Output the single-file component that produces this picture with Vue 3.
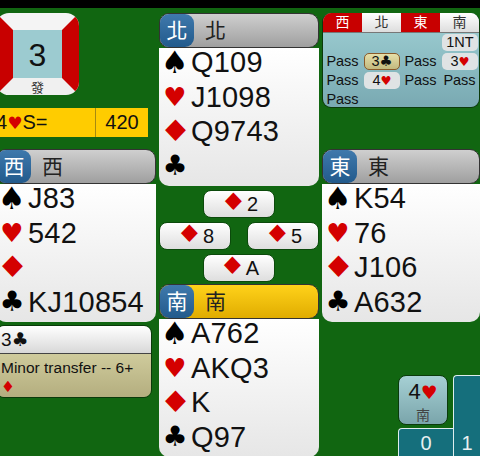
<template>
  <div class="table">
    <div class="topbar"></div>
    <div class="felt">
      <!-- left side: board, contract, west, last bid -->
      <div class="col col-left">
        <div class="board">
          <div class="board-num">3</div>
          <div class="board-dealer">發</div>
        </div>
        <div class="contract">
          <div class="contract-name">4<span class="red suit heart">♥</span>S=</div>
          <div class="contract-score">420</div>
        </div>
        <div class="hand hand-west">
          <div class="hand-head">
            <div class="hand-badge">{{ west.seat }}</div>
            <div class="hand-name">{{ west.seat }}</div>
          </div>
          <div class="hand-cards">
            <div v-for="(s, i) in suits" :key="s" class="hand-row">
              <span class="pip" :class="'pip-' + i">{{ s }}</span>
              <span class="cards">{{ west.cards[i] }}</span>
            </div>
          </div>
        </div>
        <div class="bid-info">
          <div class="bid-info-head">3<span class="suit">♣</span></div>
          <div class="bid-info-body">Minor transfer -- 6+ <span class="red suit">♦</span></div>
        </div>
      </div>

      <!-- centre: north, trick, south -->
      <div class="col col-mid">
        <div class="hand">
          <div class="hand-head">
            <div class="hand-badge">{{ north.seat }}</div>
            <div class="hand-name">{{ north.seat }}</div>
          </div>
          <div class="hand-cards">
            <div v-for="(s, i) in suits" :key="s" class="hand-row">
              <span class="pip" :class="'pip-' + i">{{ s }}</span>
              <span class="cards">{{ north.cards[i] }}</span>
            </div>
          </div>
        </div>
        <div class="trick">
          <div class="trick-row"><div class="trick-card"><span class="red suit diamond">♦</span>2</div></div>
          <div class="trick-row spread">
            <div class="trick-card"><span class="red suit diamond">♦</span>8</div>
            <div class="trick-card"><span class="red suit diamond">♦</span>5</div>
          </div>
          <div class="trick-row"><div class="trick-card"><span class="red suit diamond">♦</span>A</div></div>
        </div>
        <div class="hand">
          <div class="hand-head active">
            <div class="hand-badge">{{ south.seat }}</div>
            <div class="hand-name">{{ south.seat }}</div>
          </div>
          <div class="hand-cards">
            <div v-for="(s, i) in suits" :key="s" class="hand-row">
              <span class="pip" :class="'pip-' + i">{{ s }}</span>
              <span class="cards">{{ south.cards[i] }}</span>
            </div>
          </div>
        </div>
      </div>

      <!-- right side: auction, east, result -->
      <div class="col col-right">
        <div class="auction">
          <div class="auction-head">
            <div v-for="s in seats" :key="s.name" class="seat" :class="{ vul: s.vul }">{{ s.name }}</div>
          </div>
          <div class="auction-body">
            <div v-for="(b, i) in bids" :key="i" class="bid" :class="b.kind">
              {{ b.text }}<span v-if="b.suit" class="suit" :class="{ 'red heart': b.suit === '♥' }">{{ b.suit }}</span>
            </div>
          </div>
        </div>
        <div class="hand hand-east">
          <div class="hand-head">
            <div class="hand-badge">{{ east.seat }}</div>
            <div class="hand-name">{{ east.seat }}</div>
          </div>
          <div class="hand-cards">
            <div v-for="(s, i) in suits" :key="s" class="hand-row">
              <span class="pip" :class="'pip-' + i">{{ s }}</span>
              <span class="cards">{{ east.cards[i] }}</span>
            </div>
          </div>
        </div>
        <div class="result">
          <div class="result-left">
            <div class="final">
              <div class="final-bid">4<span class="red suit heart">♥</span></div>
              <div class="final-seat">南</div>
            </div>
            <div class="tricks-box">0</div>
          </div>
          <div class="tricks-box tall">1</div>
        </div>
      </div>
    </div>
  </div>
</template>

<script setup>
const suits = ['♠', '♥', '♦', '♣'];

const north = { seat: '北', cards: ['Q109', 'J1098', 'Q9743', ''] };
const west = { seat: '西', cards: ['J83', '542', '', 'KJ10854'] };
const east = { seat: '東', cards: ['K54', '76', 'J106', 'A632'] };
const south = { seat: '南', cards: ['A762', 'AKQ3', 'K', 'Q97'] };

const seats = [
  { name: '西', vul: true },
  { name: '北', vul: false },
  { name: '東', vul: true },
  { name: '南', vul: false },
];

const bids = [
  { text: '' }, { text: '' }, { text: '' }, { text: '1NT', kind: 'chip' },
  { text: 'Pass' }, { text: '3', suit: '♣', kind: 'chip picked' }, { text: 'Pass' }, { text: '3', suit: '♥', kind: 'chip' },
  { text: 'Pass' }, { text: '4', suit: '♥', kind: 'chip' }, { text: 'Pass' }, { text: 'Pass' },
  { text: 'Pass' },
];
</script>

<style>
html, body { margin: 0; background: #116611; overflow: hidden; }
</style>

<style scoped>
.table {
  width: 480px; height: 456px; overflow: hidden;
  display: flex; flex-direction: column;
  background: #116611; color: #111;
  font-family: "Liberation Sans", "Noto Sans CJK TC", sans-serif;
}
.topbar { height: 8px; background: #000; flex-shrink: 0; }
.felt { flex: 1; min-height: 0; display: flex; padding-top: 5px; overflow: hidden; }
.col { display: flex; flex-direction: column; flex-shrink: 0; }
.col-left { width: 160px; margin-left: -4px; }
.col-mid { width: 160px; margin-left: 3px; }
.col-right { width: 180px; margin-left: 3px; }
.red { color: #d40000; }
.suit { font-family: "DejaVu Sans", sans-serif; }
.heart { font-size: .85em; }
.diamond { display: inline-block; font-size: 1.5em; line-height: 20px; vertical-align: -1px; transform: scaleY(.8); }

/* board */
.board {
  position: relative; box-sizing: border-box; width: 83px; height: 82px; flex-shrink: 0;
  border: 17px solid; border-color: #f4f4f4 #c80000 #f0f0f0 #c80000;
  border-radius: 13px; background: #9ccbd0;
  display: flex; align-items: center; justify-content: center;
}
.board-num { font-size: 32px; padding-top: 2px; }
.board-dealer {
  position: absolute; left: 0; right: 0; bottom: -17px;
  text-align: center; font-size: 13px; line-height: 15px; color: #333;
}

/* contract */
.contract {
  display: flex; height: 29px; width: 152px; margin-top: 13px; flex-shrink: 0;
  background: #ffcc00; font-size: 20px; line-height: 29px;
}
.contract-name { width: 100px; border-right: 1px solid #a68a10; white-space: nowrap; box-sizing: border-box; }
.contract-score { flex: 1; text-align: center; }

/* hands */
.hand { flex-shrink: 0; width: 160px; }
.hand-west { margin-top: 12px; }
.hand-east { margin-top: 41px; width: 158px; }
.hand-head {
  display: flex; height: 35px; border-radius: 10px; border: 1px solid #333; box-sizing: border-box;
  background: linear-gradient(#cfcfcf, #9f9f9f);
}
.hand-head.active { background: linear-gradient(#ffd21a, #e0ac00); }
.hand-badge {
  width: 34px; text-align: center; border-radius: 9px; color: #fff;
  background: linear-gradient(#3f79ac, #225a8c);
  font-size: 21px; line-height: 33px; flex-shrink: 0;
}
.hand-name { margin-left: 11px; font-size: 21px; line-height: 33px; color: #222; }
.hand-cards {
  height: 138px; box-sizing: border-box;
  background: linear-gradient(#fff, #e6e6e6); border-radius: 0 0 10px 10px;
}
.hand-row { display: flex; height: 34.6px; font-size: 29px; line-height: 28px; white-space: nowrap; }
.pip { width: 32px; flex-shrink: 0; text-align: center; font-family: "DejaVu Sans", sans-serif; font-size: 31px; color: #000; }
.pip-1 { font-size: 26px; color: #d40000; }
.pip-2 { font-size: 37px; color: #d40000; transform: scaleY(.8); transform-origin: 50% 14px; }
.pip-3 { font-size: 28px; }
.cards { letter-spacing: .2px; }

/* trick in the middle */
.trick { display: flex; flex-direction: column; gap: 4px; margin: 4px 0 2px; }
.trick-row { display: flex; justify-content: center; height: 28px; }
.trick-row.spread { justify-content: space-between; }
.trick-card {
  width: 72px; height: 28px; box-sizing: border-box; border-radius: 8px; border: 1px solid #0c4a0c;
  background: linear-gradient(#fff, #dedede);
  text-align: center; font-size: 20px; line-height: 26px;
}

/* auction */
.auction {
  height: 95px; width: 158px; flex-shrink: 0; border-radius: 9px; overflow: hidden;
  background: linear-gradient(#9fd0d4, #79a9b2); border: 1px solid #0b3a0b; border-top: 0; box-sizing: border-box;
}
.auction-head { display: flex; height: 19px; font-size: 14px; line-height: 19px; border-bottom: 1px solid #777; }
.seat { flex: 1; text-align: center; background: linear-gradient(#fff, #ddd); color: #333; }
.seat.vul { background: #c80000; color: #fff; }
.auction-body {
  display: grid; grid-template-columns: repeat(4, 1fr); grid-auto-rows: 19px;
  font-size: 14.5px; white-space: nowrap;
}
.bid { text-align: center; height: 17px; line-height: 17px; margin-top: 1px; }
.bid.chip { background: #dfe3e4; border-radius: 5px; margin-left: 2px; margin-right: 1px; }
.bid.picked { background: linear-gradient(#e6dfa9, #c2b97f); border: 1px solid #8a5a2a; box-sizing: border-box; line-height: 15px; }

/* explanation of the selected bid */
.bid-info { width: 156px; height: 73px; flex-shrink: 0; margin-top: 3px; border-radius: 8px; overflow: hidden; border: 1px solid #0b3a0b; box-sizing: border-box; }
.bid-info-head {
  height: 27px; padding-left: 4px; font-size: 19px; line-height: 27px;
  background: linear-gradient(#fff, #d8d8d8); border-bottom: 1px solid #444;
}
.bid-info-body {
  height: 44px; padding: 4px 14px 0 4px; box-sizing: border-box; font-size: 15.5px; line-height: 19px;
  background: linear-gradient(#cfcb9c, #b3ad7e);
}

/* result corner */
.result { display: flex; align-items: flex-start; margin-top: 53px; margin-left: 76px; }
.result-left { width: 55px; flex-shrink: 0; }
.final {
  width: 50px; height: 50px; box-sizing: border-box; border-radius: 8px; border: 1px solid #0b3a0b;
  background: linear-gradient(#a6d0d4, #7aa5ab); text-align: center;
}
.final-bid { font-size: 22px; line-height: 27px; margin-top: 2px; }
.final-seat { font-size: 14px; line-height: 19px; color: #444; }
.tricks-box {
  background: #156f7c; color: #e8f0f0; text-align: center; font-size: 20px; line-height: 28px;
  border: 1px solid #dfeeee; border-width: 1px 0 0 1px; border-radius: 4px 0 0 0; box-sizing: border-box; height: 40px; margin-top: 3px;
}
.tricks-box.tall { width: 27px; height: 90px; margin-top: 0; padding-top: 53px; flex-shrink: 0; }
</style>
